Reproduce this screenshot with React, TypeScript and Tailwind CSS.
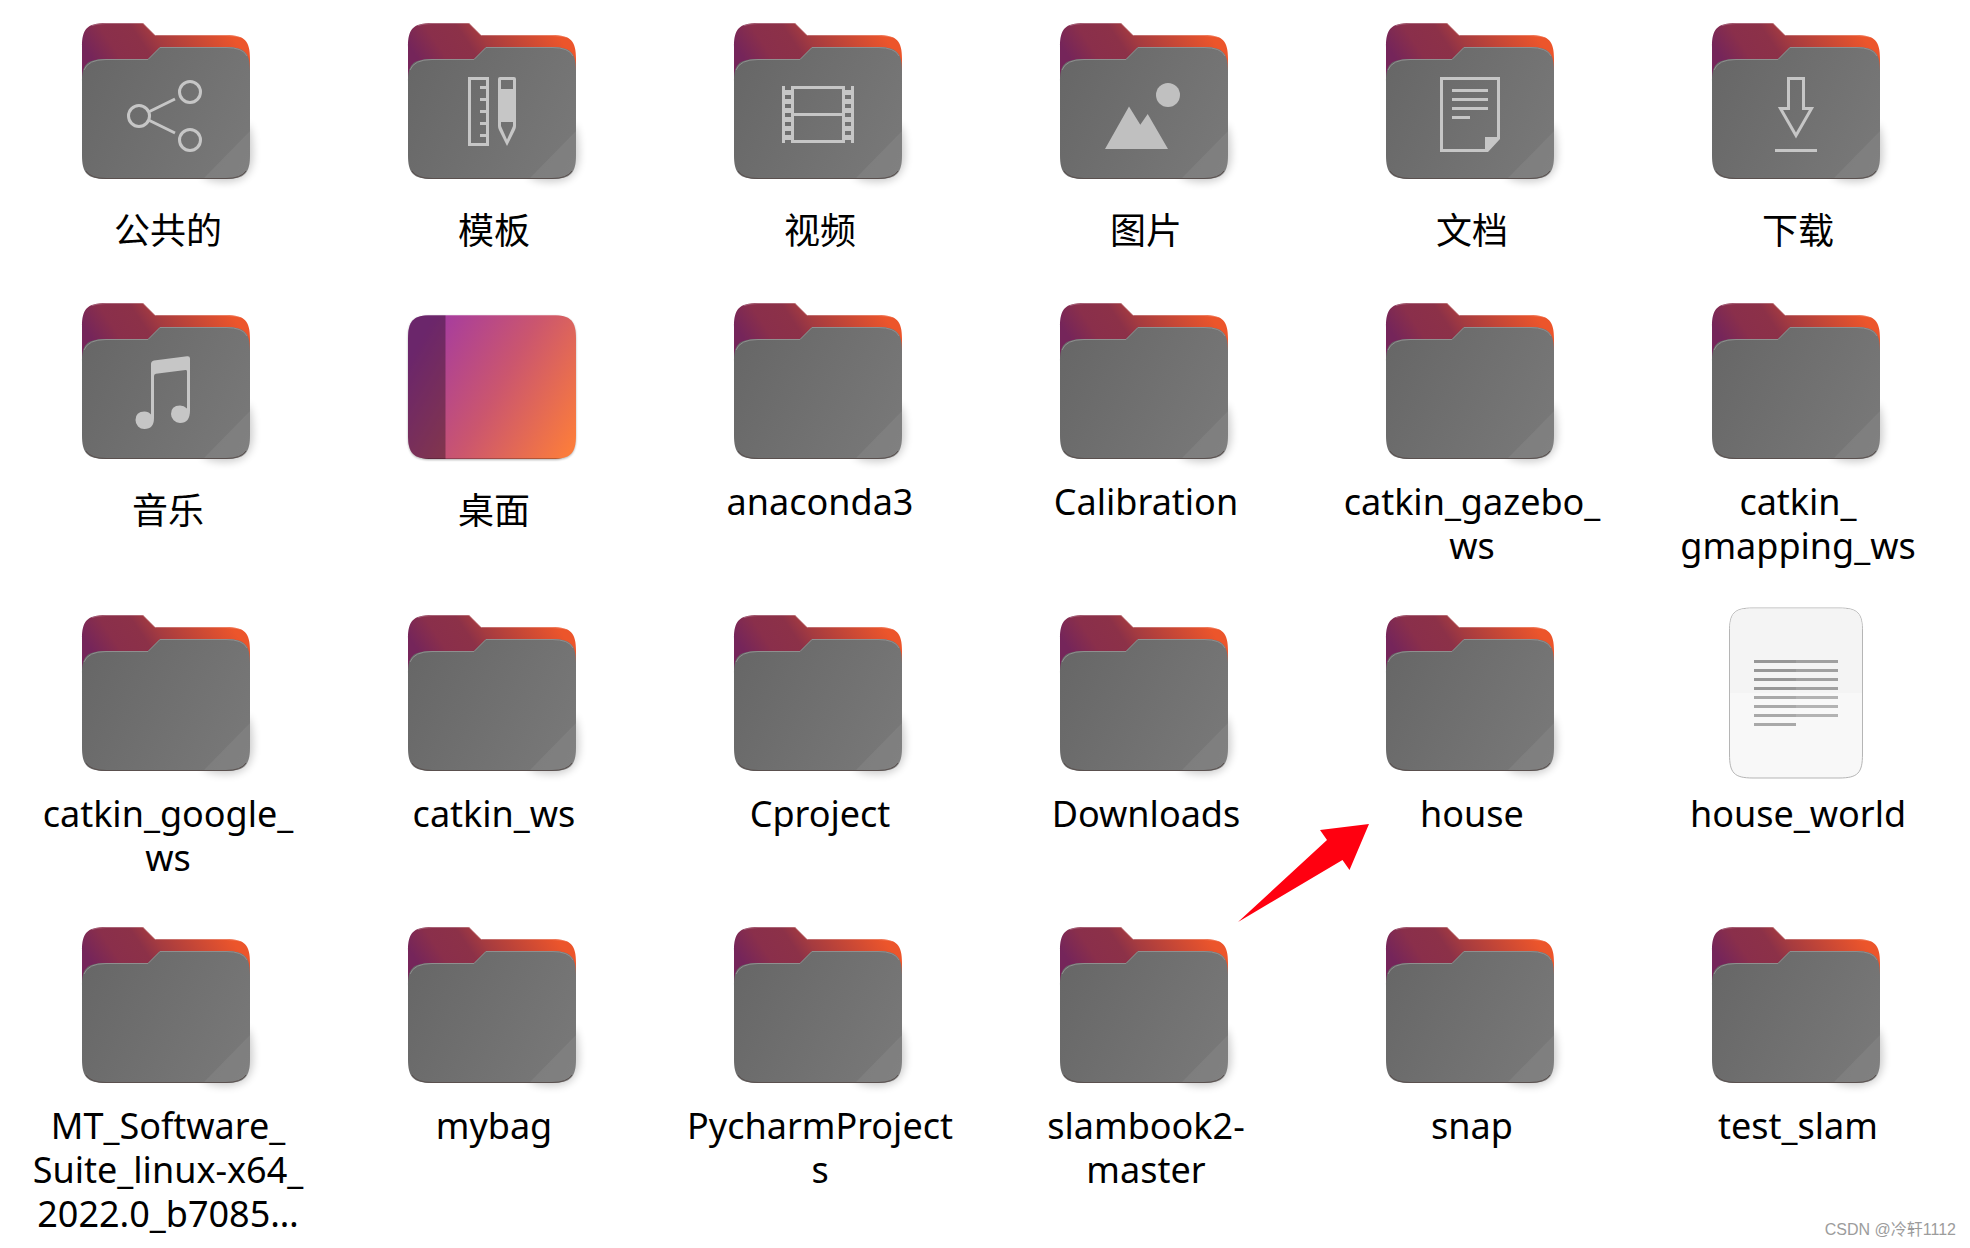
import React from 'react';

type IconKind = 'folder' | 'desktop' | 'text';

interface FileItem {
  name: string;
  kind?: IconKind;
  emblem?: React.ReactNode;
  cjk?: boolean;
  marked?: boolean;
}

const ShareEmblem = () => (
  <g fill="none" stroke="#c6c6c6" strokeWidth="3">
    <circle cx="67" cy="112" r="10.5" />
    <circle cx="118" cy="88" r="10.5" />
    <circle cx="118" cy="136" r="10.5" />
    <path d="M77.5 107.5 L103 95 M77.5 116.5 L103 129" />
  </g>
);

const TemplatesEmblem = () => (
  <g>
    <path
      d="M71.5 74.5h18v66h-18z M82 83.5h6 M82 95.5h6 M82 107.5h6 M82 119.5h6 M82 131.5h6"
      fill="none"
      stroke="#c6c6c6"
      strokeWidth="3"
    />
    <path
      d="M102 73h14q2 0 2 2v47q0 2-1 4l-8 16l-8-16q-1-2-1-4v-47q0-2 2-2z M103 76v9h12v-9z M103 118v4l6 13.500l6-13.500v-4z"
      fill="#c6c6c6"
      fillRule="evenodd"
    />
  </g>
);

const VideosEmblem = () => (
  <g fill="#c6c6c6">
    <path d="M58 82h3v57h-3z M127 82h3v57h-3z M67 82h3v57h-3z M118 82h3v57h-3z" />
    <path d="M70 82h48v3h-48z M70 109h48v3h-48z M70 136h48v3h-48z" />
    {[86, 95, 104, 113, 122, 131].map((y) => (
      <path key={y} d={`M61 ${y}h6v5h-6z M121 ${y}h6v5h-6z`} />
    ))}
  </g>
);

const PicturesEmblem = () => (
  <g fill="#c0c0c0">
    <circle cx="118" cy="91" r="12" />
    <path d="M55 145 L79 102.500 L90.300 120.700 L97.700 110 L118 145z" />
  </g>
);

const DocumentsEmblem = () => (
  <g fill="#c6c6c6">
    <path d="M64 73h60v62l-12 13h-48z M67 76v69h42v-12h12v-57z" fillRule="evenodd" />
    <path d="M76 85h36v3h-36z M76 94h36v3h-36z M76 103h36v3h-36z M76 112h18v3h-18z" />
  </g>
);

const DownloadsEmblem = () => (
  <g>
    <path
      d="M86.500 74.500h15v30h8l-15.500 27l-15.500-27h8z"
      fill="none"
      stroke="#c6c6c6"
      strokeWidth="3"
    />
    <path d="M73 145h42v3h-42z" fill="#c6c6c6" />
  </g>
);

const MusicEmblem = () => (
  <g fill="#c6c6c6">
    <path d="M79 80q0-3 3-3.500l33-4.300q3-.4 3 2.300v52q0 12.500-10 12.500a9 9 0 0 1-9-9q0-8.500 9-8.500q4 0 7 3v-37q0-1.500-1.500-1.400l-29.500 3.700q-2 .3-2 2.200v42q0 11-9.500 11a8.800 8.800 0 0 1-9-9q0-8.500 9-8.500q4 0 6.500 3z" />
  </g>
);

// Gradients shared by every icon on the page
const IconDefs = () => (
  <svg className="absolute size-0" aria-hidden="true">
    <defs>
      <linearGradient id="back" gradientUnits="userSpaceOnUse" x1="10" y1="66" x2="130" y2="-14">
        <stop offset="0.1" stopColor="#75255a" />
        <stop offset="0.27" stopColor="#8a2f4b" />
        <stop offset="0.45" stopColor="#8c3148" />
        <stop offset="0.56" stopColor="#a53b40" />
        <stop offset="1" stopColor="#ec552b" />
      </linearGradient>
      <linearGradient id="front" gradientUnits="userSpaceOnUse" x1="10" y1="70" x2="178" y2="160">
        <stop offset="0" stopColor="#676767" />
        <stop offset="1" stopColor="#797979" />
      </linearGradient>
      <linearGradient id="desktop" gradientUnits="userSpaceOnUse" x1="28" y1="46" x2="188" y2="138">
        <stop offset="0" stopColor="#a33aa3" />
        <stop offset="0.5" stopColor="#cb566e" />
        <stop offset="1" stopColor="#fb7c3c" />
      </linearGradient>
      <filter id="blur" x="-20%" y="-20%" width="140%" height="140%">
        <feGaussianBlur stdDeviation="4" />
      </filter>
      <filter id="blurSmall" x="-20%" y="-20%" width="140%" height="140%">
        <feGaussianBlur stdDeviation="1" />
      </filter>
      <clipPath id="desktopShape">
        <path d="M10 55C10 37 15 31 34 31H154C173 31 178 37 178 55V151C178 169 173 175 154 175H34C15 175 10 169 10 151z" />
      </clipPath>
    </defs>
  </svg>
);

const FRONT =
  'M10 78C10 61 14 55 34 55H76L88 43H154C173 43 178 49 178 67V151C178 169 173 175 154 175H34C15 175 10 169 10 151z';

const FolderIcon: React.FC<{ children?: React.ReactNode }> = ({ children }) => (
  <svg viewBox="0 0 192 192" className="size-48 overflow-visible" aria-hidden="true">
    <path d="M130 172L176 120Q181 130 181 150Q181 178 154 178Q138 178 130 172z" fill="#000" opacity="0.2" filter="url(#blur)" />
    <path
      d="M10 43C10 25 15 19 34 19H71L83 31H154C173 31 178 37 178 55V140H10z"
      fill="url(#back)"
    />
    <path d="M20 21.500Q25 19.500 34 19.500H71L83 31.500H154Q163 31.500 168 33" fill="none" stroke="#fff" strokeOpacity="0.25" />
    <path d={FRONT} fill="url(#front)" />
    <path d="M178 127L131 175H154C173 175 178 169 178 151z" fill="#fff" opacity="0.06" />
    <path d="M12 66Q16 55.500 34 55.500H76L88 43.500H154Q171 43.500 175 52" fill="none" stroke="#8f8f8f" />
    <path d="M14 167Q19 174.500 34 174.500H154Q169 174.500 174 167" fill="none" stroke="#5a504e" />
    {children}
  </svg>
);

const DesktopIcon = () => (
  <svg viewBox="0 0 192 192" className="size-48 overflow-visible" aria-hidden="true">
    <path
      d="M10 56C10 38 15 32 34 32H154C173 32 178 38 178 56V152C178 170 173 176 154 176H34C15 176 10 170 10 152z"
      fill="#000"
      opacity="0.3"
      filter="url(#blurSmall)"
    />
    <g clipPath="url(#desktopShape)">
      <path d="M10 31h168v144h-168z" fill="url(#desktop)" />
      <path d="M10 31h37.500v144h-37.500z" fill="#000" opacity="0.34" />
      <path d="M10 31.500h168" stroke="#fff" strokeOpacity="0.25" />
      <path d="M10 174.500h168" stroke="#000" strokeOpacity="0.25" />
    </g>
  </svg>
);

const TextFileIcon = () => (
  <svg viewBox="0 0 192 192" className="size-48 overflow-visible" aria-hidden="true">
    <path
      d="M27.500 36C27.500 17 32 12 51 12H137C156 12 160.500 17 160.500 36V158C160.500 177 156 182 137 182H51C32 182 27.500 177 27.500 158z"
      fill="#f8f8f8"
      stroke="#b5b5b5"
    />
    <path d="M28 97V36C28 17 32 12.500 51 12.500H137C156 12.500 160 17 160 36V97z" fill="#f4f4f4" />
    {[64, 73, 82, 91, 100, 109, 118].map((y) => (
      <g key={y}>
        <path d={`M52 ${y}h42v3h-42z`} fill={y < 97 ? '#979797' : '#a9a9a9'} />
        <path d={`M94 ${y}h42v3h-42z`} fill={y < 97 ? '#a1a1a1' : '#b3b3b3'} />
      </g>
    ))}
    <path d="M52 127h42v3h-42z" fill="#a9a9a9" />
  </svg>
);

const files: FileItem[] = [
  { name: '公共的', emblem: <ShareEmblem />, cjk: true },
  { name: '模板', emblem: <TemplatesEmblem />, cjk: true },
  { name: '视频', emblem: <VideosEmblem />, cjk: true },
  { name: '图片', emblem: <PicturesEmblem />, cjk: true },
  { name: '文档', emblem: <DocumentsEmblem />, cjk: true },
  { name: '下载', emblem: <DownloadsEmblem />, cjk: true },
  { name: '音乐', emblem: <MusicEmblem />, cjk: true },
  { name: '桌面', kind: 'desktop', cjk: true },
  { name: 'anaconda3' },
  { name: 'Calibration' },
  { name: 'catkin_gazebo_\nws' },
  { name: 'catkin_\ngmapping_ws' },
  { name: 'catkin_google_\nws' },
  { name: 'catkin_ws' },
  { name: 'Cproject' },
  { name: 'Downloads' },
  { name: 'house', marked: true },
  { name: 'house_world', kind: 'text' },
  { name: 'MT_Software_\nSuite_linux-x64_\n2022.0_b7085…' },
  { name: 'mybag' },
  { name: 'PycharmProject\ns' },
  { name: 'slambook2-\nmaster' },
  { name: 'snap' },
  { name: 'test_slam' },
];

const FileTile: React.FC<{ file: FileItem }> = ({ file }) => (
  <button type="button" className="relative flex flex-col items-center justify-start gap-1 text-black">
    {file.kind === 'desktop' && <DesktopIcon />}
    {file.kind === 'text' && <TextFileIcon />}
    {!file.kind && <FolderIcon>{file.emblem}</FolderIcon>}
    <span
      className={
        file.cjk
          ? "font-['Noto_Sans_CJK_SC',sans-serif] text-[36px] leading-[56px]"
          : "whitespace-pre font-['Noto_Sans','Noto_Sans_CJK_SC',sans-serif] text-[36px] leading-[44px]"
      }
    >
      {file.name}
    </span>
    {/* Red arrow pointing at the name */}
    {file.marked && (
      <svg viewBox="0 0 132 98" className="absolute top-[228px] -left-[71px] h-[98px] w-[132px]" aria-hidden="true">
        <path d="M131 0L82 6L89 16L0 98L104.500 36L111.500 46z" fill="#ff0010" />
      </svg>
    )}
  </button>
);

const App: React.FC = () => {
  return (
    <main className="relative min-h-screen bg-white">
      <IconDefs />
      <div className="grid grid-cols-6 gap-y-7 pt-1 pr-[9px] pl-[5px]">
        {files.map((file) => (
          <FileTile key={file.name} file={file} />
        ))}
      </div>
      <p className="absolute right-3.5 bottom-1.5 font-['Liberation_Sans','Noto_Sans_CJK_SC',sans-serif] text-base leading-6 text-[#9c9c9c]">
        CSDN @冷轩1112
      </p>
    </main>
  );
};

export default App;
